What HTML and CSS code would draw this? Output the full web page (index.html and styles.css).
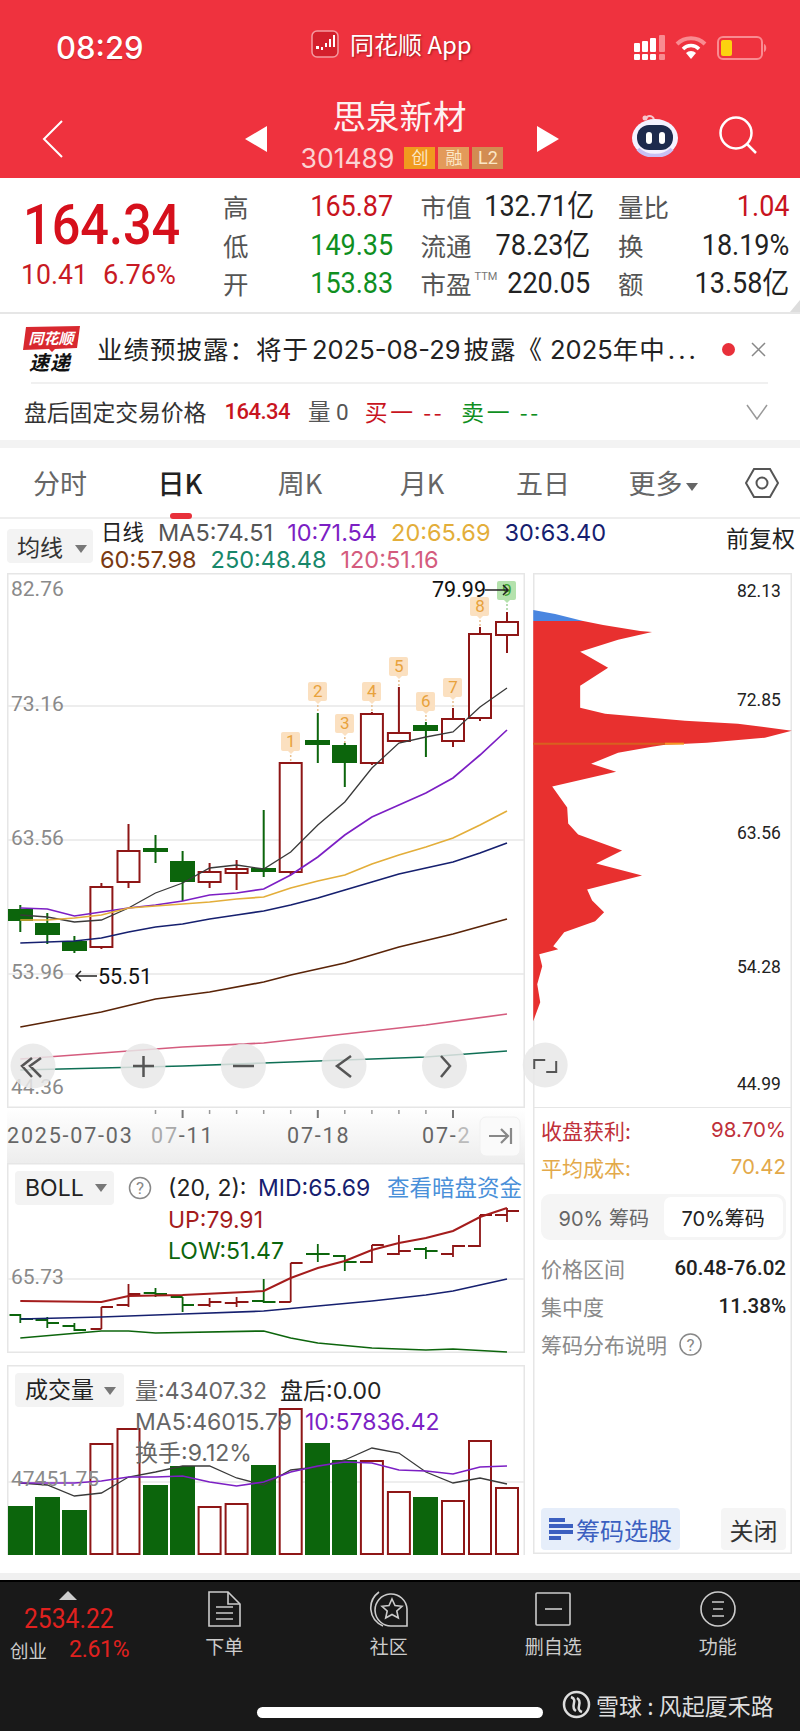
FILE: index.html
```html
<!DOCTYPE html>
<html lang="zh">
<head>
<meta charset="utf-8">
<title>思泉新材</title>
<link rel="stylesheet" href="styles.css">
</head>
<body>
<div class="page">
<header class="head">
  <div class="status">
    <div class="time">08:29</div>
    <div class="app">
      <svg class="app-logo" width="28" height="28" viewBox="0 0 28 28"><rect x="1" y="1" width="26" height="26" rx="5" fill="#d4202c" stroke="#f59aa0" stroke-width="1.5"/><path d="M5 19h3v-3H5zM10 17h2v3h-2zM14 13h2v4h-2zM18 9h2v8h-2zM22 5h2v12h-2z" fill="#fff"/></svg>
      <span class="app-name">同花顺 App</span>
    </div>
    <div class="sys">
      <svg width="32" height="26" viewBox="0 0 32 26"><g fill="#fff"><rect x="1" y="8" width="6" height="9" rx="1"/><rect x="9" y="6" width="6" height="11" rx="1"/><rect x="17" y="3" width="6" height="14" rx="1"/><rect x="1" y="19" width="6" height="6" rx="1"/><rect x="9" y="19" width="6" height="6" rx="1"/><rect x="17" y="19" width="6" height="6" rx="1"/></g><g fill="#f98b91"><rect x="26" y="0" width="6" height="17" rx="1"/><rect x="26" y="19" width="6" height="6" rx="1"/></g></svg>
      <svg class="wifi" width="32" height="24" viewBox="0 0 32 24"><path d="M2 8a20 20 0 0 1 28 0" fill="none" stroke="#f98b91" stroke-width="4"/><path d="M8 13a11 11 0 0 1 16 0" fill="none" stroke="#fff" stroke-width="3.5"/><path d="M16 23l-5-6a7 7 0 0 1 10 0z" fill="#fff"/></svg>
      <svg class="batt" width="51" height="24" viewBox="0 0 51 24"><rect x="1" y="1" width="44" height="22" rx="5" fill="none" stroke="#f98b91" stroke-width="2"/><rect x="4" y="4" width="11" height="16" rx="2" fill="#fcd20f"/><path d="M47 8c3 1 3 7 0 8z" fill="#f98b91"/></svg>
    </div>
  </div>
  <div class="nav">
    <div class="nav-back"><svg width="22" height="38" viewBox="0 0 22 38"><path d="M20 1L2 19l18 18" fill="none" stroke="#fff" stroke-width="2"/></svg></div>
    <svg class="tri" width="22" height="26" viewBox="0 0 22 26"><path d="M22 0v26L0 13z" fill="#fff"/></svg>
    <div class="nav-title">
      <div class="name">思泉新材</div>
      <div class="code-row"><span class="code">301489</span><span class="tag tag-a">创</span><span class="tag tag-b">融</span><span class="tag tag-c">L2</span></div>
    </div>
    <svg class="tri" width="22" height="26" viewBox="0 0 22 26"><path d="M0 0v26l22-13z" fill="#fff"/></svg>
    <svg class="robot" width="46" height="44" viewBox="0 0 46 44"><path d="M14 6c1-4 6-4 8 0" fill="none" stroke="#f6c6cc" stroke-width="2"/><circle cx="13" cy="5" r="2.5" fill="#f6c6cc"/><ellipse cx="23" cy="25" rx="23" ry="19" fill="#f4f2ff"/><path d="M6 36c8 9 26 9 34 0" fill="none" stroke="#c8c0f4" stroke-width="4"/><rect x="5" y="12" width="36" height="25" rx="12" fill="#1d2a4d"/><rect x="14" y="19" width="6" height="12" rx="3" fill="#fff"/><rect x="27" y="19" width="6" height="12" rx="3" fill="#fff"/></svg>
    <svg class="search" width="38" height="38" viewBox="0 0 38 38"><circle cx="17" cy="17" r="15.5" fill="none" stroke="#fff" stroke-width="2.5"/><path d="M28 28l9 9" stroke="#fff" stroke-width="2.5"/></svg>
  </div>
</header>

<section class="quote">
  <div class="q-left">
    <div class="q-price">164.34</div>
    <div class="q-change"><span class="q-ch-a">10.41</span><span class="q-ch-b">6.76%</span></div>
  </div>
  <div class="q-grid">
    <div class="q-cell"><span class="q-l">高</span><span class="q-v red">165.87</span></div>
    <div class="q-cell"><span class="q-l">市值</span><span class="q-v">132.71亿</span></div>
    <div class="q-cell"><span class="q-l">量比</span><span class="q-v red">1.04</span></div>
    <div class="q-cell"><span class="q-l">低</span><span class="q-v green">149.35</span></div>
    <div class="q-cell"><span class="q-l">流通</span><span class="q-v">78.23亿</span></div>
    <div class="q-cell"><span class="q-l">换</span><span class="q-v">18.19%</span></div>
    <div class="q-cell"><span class="q-l">开</span><span class="q-v green">153.83</span></div>
    <div class="q-cell"><span class="q-l">市盈<sup class="ttm">TTM</sup></span><span class="q-v">220.05</span></div>
    <div class="q-cell"><span class="q-l">额</span><span class="q-v">13.58亿</span></div>
  </div>
  <div class="corner"></div>
</section>

<section class="notice">
  <div class="notice-row">
    <svg class="ths" width="58" height="46" viewBox="0 0 58 46"><path d="M3 1L57 0 54 22 32 23 29 26 26 23 0 24z" fill="#d8282f"/><text x="28" y="18" class="ths-a">同花顺</text><text x="27" y="44" class="ths-b">速递</text></svg>
    <div class="notice-text">业绩预披露：将于<span class="lat">2025-08-29</span>披露《<span class="lat lat2">2025</span>年中<span class="dots">...</span></div>
    <span class="dot"></span>
    <svg class="close" width="15" height="15" viewBox="0 0 15 15"><path d="M1 1l13 13M14 1L1 14" stroke="#888" stroke-width="1.5"/></svg>
  </div>
  <div class="after-row">
    <span class="ah-label">盘后固定交易价格</span>
    <span class="ah-price">164.34</span>
    <span class="ah-vol">量 0</span>
    <span class="ah-buy">买一 --</span>
    <span class="ah-sell">卖一 --</span>
    <svg class="chev" width="22" height="16" viewBox="0 0 22 16"><path d="M1 1l10 14L21 1" fill="none" stroke="#999" stroke-width="1.5"/></svg>
  </div>
</section>

<nav class="tabs">
  <div class="tab">分时</div>
  <div class="tab active">日K</div>
  <div class="tab">周K</div>
  <div class="tab tab-s1">月K</div>
  <div class="tab tab-s2">五日</div>
  <div class="tab">更多<i class="caret-sm"></i></div>
  <svg class="hex" width="34" height="30" viewBox="0 0 34 30"><path d="M9 1h16l8 14-8 14H9L1 15z" fill="none" stroke="#555" stroke-width="2"/><circle cx="17" cy="15" r="5.5" fill="none" stroke="#555" stroke-width="2"/></svg>
</nav>

<div class="ma-bar">
  <div class="ma-btn">均线<i class="caret"></i></div>
  <div class="ma-lines">
    <div class="ma-row"><span class="ma-t">日线</span><span class="c-gray">MA5:74.51</span><span class="c-purple">10:71.54</span><span class="c-gold">20:65.69</span><span class="c-navy">30:63.40</span></div>
    <div class="ma-row"><span class="c-brown">60:57.98</span><span class="c-teal">250:48.48</span><span class="c-pink">120:51.16</span></div>
  </div>
  <div class="fq">前复权</div>
</div>

<main class="main">
<div class="left">
  <div class="panel chart">
    <svg class="canvas" width="518" height="535" viewBox="7 573 518 535">
      <path class="grid" d="M8 706H524M8 840H524M8 974H524"/>
      <text class="lbl" x="11" y="596">82.76</text>
      <text class="lbl" x="11" y="711">73.16</text>
      <text class="lbl" x="11" y="845">63.56</text>
      <text class="lbl" x="11" y="979">53.96</text>
      <text class="lbl" x="11" y="1094">44.36</text>
      <path class="wu" d="M101.4 883V949M128.5 824V888M209.6 863V888M236.6 860V890M290.7 762V875M371.9 712V765M398.9 687V742M453 708V747M480 627V721M507 612V653"/>
      <path class="wd" d="M20.3 905V932M47.3 913V944M74.4 936V953M155.5 835V863M182.6 851V901M263.7 810V877M317.8 713V763M344.8 743V787M425.9 722V757"/>
      <g class="dn">
        <rect x="8" y="909" width="25" height="12"/><rect x="35" y="923" width="25" height="12"/><rect x="62" y="941" width="25" height="10"/><rect x="143" y="848" width="25" height="4"/><rect x="170" y="861" width="25" height="21"/><rect x="251" y="868" width="25" height="4"/><rect x="305" y="740" width="25" height="5"/><rect x="332" y="745" width="25" height="18"/><rect x="413" y="725" width="25" height="6"/>
      </g>
      <g class="up">
        <rect x="90.4" y="887" width="22" height="60"/><rect x="117.5" y="851" width="22" height="31"/><rect x="198.6" y="872" width="22" height="10"/><rect x="225.6" y="869" width="22" height="4"/><rect x="279.7" y="763" width="22" height="109"/><rect x="360.9" y="714" width="22" height="49"/><rect x="387.9" y="733" width="22" height="8"/><rect x="442" y="719" width="22" height="22"/><rect x="469" y="634" width="22" height="84"/><rect x="496" y="622" width="22" height="13"/>
      </g>
      <polyline class="ln l-black" points="20.3,915 47.3,917 74.4,922 101.4,920 128.5,908 155.5,893 182.6,883 209.6,868 236.6,865 263.7,869 290.7,852 317.8,825 344.8,802 371.9,768 398.9,743 425.9,737 453,732 480,707 507,688"/>
      <polyline class="ln l-purple" points="20.3,908 47.3,909 74.4,916 101.4,912 128.5,908 155.5,905 182.6,901 209.6,895 236.6,893 263.7,889 290.7,875 317.8,857 344.8,835 371.9,817 398.9,805 425.9,793 453,778 480,755 507,730"/>
      <polyline class="ln l-gold" points="20.3,920 47.3,920 74.4,918 101.4,915 128.5,908 155.5,906 182.6,904 209.6,902 236.6,899 263.7,897 290.7,888 317.8,881 344.8,875 371.9,864 398.9,855 425.9,847 453,838 480,825 507,811"/>
      <polyline class="ln l-navy" points="20.3,943 47.3,942 74.4,941 101.4,938 128.5,932 155.5,927 182.6,924 209.6,919 236.6,915 263.7,911 290.7,905 317.8,898 344.8,890 371.9,882 398.9,874 425.9,868 453,862 480,853 507,843"/>
      <polyline class="ln l-brown" points="20.3,1027 74.4,1017 101.4,1012 155.5,999 209.6,992 263.7,982 290.7,975 344.8,963 398.9,947 453,934 507,919"/>
      <polyline class="ln l-pink" points="20.3,1059 101.4,1053 182.6,1047 263.7,1043 344.8,1034 425.9,1025 507,1014"/>
      <polyline class="ln l-teal" points="20.3,1070 101.4,1068 182.6,1066 263.7,1063 344.8,1060 425.9,1057 507,1051"/>
      <g class="pin"><rect x="281" y="732" width="19" height="19" rx="2"/><path class="pin-t" d="M288 751h6l-3 3z"/><path class="pin-l" d="M290.7 755V762"/><text x="290.7" y="747">1</text></g>
      <g class="pin"><rect x="308" y="682" width="19" height="19" rx="2"/><path class="pin-t" d="M315 701h6l-3 3z"/><path class="pin-l" d="M317.8 705V712"/><text x="317.8" y="697">2</text></g>
      <g class="pin"><rect x="335" y="714" width="19" height="19" rx="2"/><path class="pin-t" d="M342 733h6l-3 3z"/><path class="pin-l" d="M344.8 737V743"/><text x="344.8" y="729">3</text></g>
      <g class="pin"><rect x="362" y="682" width="19" height="19" rx="2"/><path class="pin-t" d="M369 701h6l-3 3z"/><path class="pin-l" d="M371.9 705V713"/><text x="371.9" y="697">4</text></g>
      <g class="pin"><rect x="389" y="657" width="19" height="19" rx="2"/><path class="pin-t" d="M396 676h6l-3 3z"/><path class="pin-l" d="M398.9 680V687"/><text x="398.9" y="672">5</text></g>
      <g class="pin"><rect x="416" y="692" width="19" height="19" rx="2"/><path class="pin-t" d="M423 711h6l-3 3z"/><path class="pin-l" d="M425.9 715V722"/><text x="425.9" y="707">6</text></g>
      <g class="pin"><rect x="443" y="678" width="19" height="19" rx="2"/><path class="pin-t" d="M450 697h6l-3 3z"/><path class="pin-l" d="M453 701V708"/><text x="453" y="693">7</text></g>
      <g class="pin"><rect x="470" y="597" width="19" height="19" rx="2"/><path class="pin-t" d="M477 616h6l-3 3z"/><path class="pin-l" d="M480 620V627"/><text x="480" y="612">8</text></g>
      <g class="pin pin-g"><rect x="497" y="581" width="19" height="19" rx="2"/><path class="pin-t" d="M504 600h6l-3 3z"/><path class="pin-l" d="M507 604V612"/><text x="507" y="596">9</text></g>
      <text class="mark" x="432" y="597">79.99</text>
      <path class="arrow" d="M485 590H508M503 585L508 590 503 595"/>
      <path class="arrow" d="M76 976H97M81 971L76 976 81 981"/>
      <text class="mark" x="98" y="984">55.51</text>
      <g class="fab"><circle cx="33" cy="1066" r="22.5"/><circle cx="143" cy="1066" r="22.5"/><circle cx="243.4" cy="1066" r="22.5"/><circle cx="344" cy="1066" r="22.5"/><circle cx="444.5" cy="1066" r="22.5"/></g>
      <path class="fab-i" d="M32 1058L22 1066 32 1077M41 1058L30 1066 41 1077M133 1066H154M143.5 1056V1077M233 1066H254M351 1056L337 1066 351 1077M441 1056L450 1066 441 1077"/>
    </svg>
  </div>
  <svg class="axis" width="518" height="55" viewBox="7 1108 518 55">
    <defs><linearGradient id="axg" x1="0" y1="0" x2="0" y2="1"><stop offset="0" stop-color="#fff"/><stop offset="1" stop-color="#ededed"/></linearGradient></defs>
    <rect x="7" y="1108" width="518" height="55" fill="url(#axg)"/>
    <path class="tick" d="M155.5 1110V1114M209.6 1110V1114M236.6 1110V1114M263.7 1110V1114M290.7 1110V1114M344.8 1110V1114M371.9 1110V1114M398.9 1110V1114M425.9 1110V1114"/>
    <path class="tick-b" d="M182.6 1110V1118M317.8 1110V1118M453 1110V1118"/>
    <text class="date" x="7" y="1143">2025-07-03</text>
    <text class="date" x="151" y="1143"><tspan fill="#aaa">07</tspan>-11</text>
    <text class="date" x="287" y="1143">07-18</text>
    <text class="date" x="422" y="1143">07-<tspan fill="#bbb">2</tspan></text>
    <rect x="480" y="1117" width="40" height="39" rx="6" fill="#fafafa" stroke="#f0f0f0"/>
    <path class="tojump" d="M489 1136H508M501 1129L508 1136 501 1143M511 1128V1144"/>
  </svg>
  <div class="panel boll">
    <svg class="canvas" width="518" height="190" viewBox="7 1163 518 190">
      <path class="grid" d="M8 1279H524"/>
      <rect class="btn" x="15" y="1171" width="99" height="34" rx="4"/>
      <text class="t-d" x="25" y="1196">BOLL</text>
      <path class="cr" d="M95 1184H107L101 1192z"/>
      <circle cx="140" cy="1188" r="10.5" fill="none" stroke="#888" stroke-width="1.5"/>
      <text class="t-q" x="140" y="1194">?</text>
      <text class="t-d" x="168" y="1196">(20, 2):</text>
      <text class="t-mid" x="258" y="1196">MID:65.69</text>
      <text class="t-link" x="387" y="1196">查看暗盘资金</text>
      <text class="t-up" x="168" y="1228">UP:79.91</text>
      <text class="t-low" x="168" y="1259">LOW:51.47</text>
      <text class="lbl" x="11" y="1284">65.73</text>
      <path class="tk-d" d="M20.3 1314V1323M9.5 1315H20.3M20.3 1319H33M47.3 1317V1328M35.5 1320H47.3M47.3 1323H59M74.4 1323V1331M62.5 1326H74.4M74.4 1330H86M155.5 1288V1297M143.7 1293H155.5M155.5 1294H167M182.6 1297V1312M170.7 1297H182.6M182.6 1305H194M263.7 1279V1303M252 1301H263.7M263.7 1302H275.5M317.8 1244V1262M306 1254H329.6M344.8 1255V1271M333 1256H344.8M344.8 1262H356.6M425.9 1247V1259M414 1249H425.9M425.9 1251H437.6"/>
      <path class="tk-u" d="M101.4 1307V1329M90.6 1329H101.4M101.4 1307H113M128.5 1284V1307M116.6 1305H128.5M128.5 1294H140.3M209.6 1298V1307M197.8 1305H209.6M209.6 1302H221.4M236.6 1297V1307M224.8 1303H236.6M236.6 1302H248.5M290.7 1263V1302M279 1302H290.7M290.7 1263H302.6M371.9 1245V1263M360 1262H371.9M371.9 1245H383.8M398.9 1235V1255M387 1254H398.9M398.9 1251H410.8M453 1245V1257M441 1254H453M453 1246H465M480 1215V1247M468 1246H480M480 1215H492M507 1208V1222M495 1215H507M507 1211H519"/>
      <polyline class="ln l-up" points="20.3,1301 101.4,1302 128.5,1296 182.6,1295 263.7,1291 290.7,1278 317.8,1268 344.8,1261 371.9,1250 398.9,1243 425.9,1238 453,1231 480,1217 507,1208"/>
      <polyline class="ln l-navy" points="20.3,1319 101.4,1317 182.6,1314 263.7,1311 317.8,1306 371.9,1301 425.9,1295 453,1291 480,1285 507,1279"/>
      <polyline class="ln l-green" points="20.3,1338 101.4,1331 128.5,1331 155.5,1333 263.7,1331 290.7,1338 317.8,1343 371.9,1348 425.9,1350 453,1349 507,1352"/>
    </svg>
  </div>
  <div class="panel vol">
    <svg class="canvas" width="518" height="190" viewBox="7 1365 518 190">
      <path class="grid" d="M8 1482H524"/>
      <rect class="btn" x="15" y="1373" width="109" height="34" rx="4"/>
      <text class="t-d cn" x="25" y="1398">成交量</text>
      <path class="cr" d="M104 1387H116L110 1395z"/>
      <g class="dn">
        <rect x="8" y="1506" width="25" height="49"/><rect x="35" y="1497" width="25" height="58"/><rect x="62" y="1510" width="25" height="45"/><rect x="143" y="1485" width="25" height="70"/><rect x="170" y="1466" width="25" height="89"/><rect x="251" y="1465" width="25" height="90"/><rect x="305" y="1443" width="25" height="112"/><rect x="332" y="1460" width="25" height="95"/><rect x="413" y="1497" width="25" height="58"/>
      </g>
      <g class="up">
        <rect x="90.4" y="1444" width="22" height="110"/><rect x="117.5" y="1429" width="22" height="125"/><rect x="198.6" y="1507" width="22" height="47"/><rect x="225.6" y="1504" width="22" height="50"/><rect x="279.7" y="1409" width="22" height="145"/><rect x="360.9" y="1461" width="22" height="93"/><rect x="387.9" y="1492" width="22" height="62"/><rect x="442" y="1501" width="22" height="53"/><rect x="469" y="1441" width="22" height="113"/><rect x="496" y="1488" width="22" height="66"/>
      </g>
      <polyline class="ln l-black" points="20.3,1483 47.3,1485 74.4,1496 101.4,1493 128.5,1477 155.5,1472 182.6,1466 209.6,1466 236.6,1478 263.7,1485 290.7,1470 317.8,1467 344.8,1460 371.9,1448 398.9,1453 425.9,1472 453,1483 480,1478 507,1484"/>
      <polyline class="ln l-purple" points="20.3,1483 47.3,1483 74.4,1483 101.4,1481 128.5,1477 155.5,1477 182.6,1476 209.6,1482 236.6,1486 263.7,1482 290.7,1472 317.8,1466 344.8,1462 371.9,1463 398.9,1470 425.9,1471 453,1474 480,1467 507,1466"/>
      <text class="t-g" x="135" y="1399">量:43407.32</text>
      <text class="t-d" x="280" y="1399">盘后:0.00</text>
      <text class="t-g" x="135" y="1430">MA5:46015.79</text>
      <text class="t-p" x="305" y="1430">10:57836.42</text>
      <text class="t-g" x="135" y="1461">换手:9.12%</text>
      <text class="lbl" x="11" y="1486">47451.75</text>
    </svg>
  </div>
</div>

<aside class="right">
  <svg class="chip" width="259" height="535" viewBox="533 573 259 535">
    <polygon fill="#4a86e0" points="533,610 555,614 583,621 533,621"/>
    <polygon fill="#e8302f" points="533,621 583,621 603,625 640,631 652,632 618,640 580,652 608,668 580,686 580,708 605,714 685,721 738,724 792,731 765,738 707,743 665,745 652,747 618,753 591,764 616,772 552,787 567,808 568,824 578,835 622,851 596,864 642,876 587,890 592,901 604,913 595,922 564,933 553,947 558,950 539,955 542,967 537,985 540,1003 533,1022"/>
    <path d="M533 744H665" stroke="#d8601f" stroke-width="2"/><path d="M665 744H684" stroke="#f59a23" stroke-width="2"/>
    <text class="chip-l" x="781" y="597">82.13</text>
    <text class="chip-l" x="781" y="706">72.85</text>
    <text class="chip-l" x="781" y="840">63.56</text>
    <text class="chip-l" x="781" y="974">54.28</text>
    <text class="chip-l" x="781" y="1091">44.99</text>
    <circle class="fab-c" cx="545" cy="1066" r="22.5"/>
    <path class="fab-i thin" d="M534 1070V1061H545M556 1062V1073H546"/>
  </svg>
  <div class="stats">
    <div class="s-row h37 c-profit"><span>收盘获利:</span><span class="s-num">98.70%</span></div>
    <div class="s-row h37 c-cost"><span>平均成本:</span><span class="s-num">70.42</span></div>
    <div class="seg"><div class="seg-i">90% 筹码</div><div class="seg-i on">70%筹码</div></div>
    <div class="s-row c-k"><span>价格区间</span><span class="s-val">60.48-76.02</span></div>
    <div class="s-row c-k"><span>集中度</span><span class="s-val">11.38%</span></div>
    <div class="s-row c-k left-row"><span>筹码分布说明</span><svg width="23" height="23" viewBox="0 0 23 23"><circle cx="11.5" cy="11.5" r="10.5" fill="none" stroke="#888" stroke-width="1.5"/><text class="t-q" x="11.5" y="17.5">?</text></svg></div>
    <div class="s-btns">
      <div class="b-blue"><svg width="24" height="24" viewBox="0 0 24 24"><path d="M0 3h16M0 9h24M0 15h24M0 21h12" stroke="#3b5fc0" stroke-width="4"/></svg>筹码选股</div>
      <div class="b-gray">关闭</div>
    </div>
  </div>
</aside>
</main>
<div class="gap"></div>

<footer class="foot">
  <div class="foot-nav">
    <div class="idx">
      <i class="idx-tri"></i>
      <div class="idx-v">2534.22</div>
      <div class="idx-r"><span class="idx-n">创业</span><span class="idx-p">2.61%</span></div>
    </div>
    <div class="f-item"><svg width="34" height="36" viewBox="0 0 34 36"><path d="M2 1H21L33 13V35H2z" fill="none" stroke="#ccc" stroke-width="1.6"/><path d="M21 1V13H33" fill="none" stroke="#ccc" stroke-width="1.6"/><path d="M9 16H26M9 22H26M9 28H26" stroke="#ccc" stroke-width="1.6"/></svg><span>下单</span></div>
    <div class="f-item"><svg width="40" height="36" viewBox="0 0 40 36"><path d="M10 1C-2 10-1 28 14 35" fill="none" stroke="#ccc" stroke-width="1.6"/><path d="M38 35H23A16 16 0 1 1 38 18z" fill="none" stroke="#ccc" stroke-width="1.6"/><path d="M23 8l3 6.5 7 .8-5.2 4.700 1.5 7-6.300-3.500-6.300 3.500 1.500-7-5.200-4.700 7-.8z" fill="none" stroke="#ccc" stroke-width="1.6"/></svg><span>社区</span></div>
    <div class="f-item"><svg width="38" height="36" viewBox="0 0 38 36"><rect x="2" y="2" width="34" height="32" rx="1" fill="none" stroke="#ccc" stroke-width="1.6"/><path d="M11 18H28" stroke="#ccc" stroke-width="1.6"/></svg><span>删自选</span></div>
    <div class="f-item"><svg width="36" height="36" viewBox="0 0 36 36"><circle cx="18" cy="18" r="17" fill="none" stroke="#ccc" stroke-width="1.6"/><path d="M12 11H24M13 18H23M12 25H24" stroke="#ccc" stroke-width="1.6"/></svg><span>功能</span></div>
  </div>
  <div class="foot-bottom">
    <div class="home"></div>
    <div class="wm"><svg width="29" height="29" viewBox="0 0 29 29"><circle cx="14.5" cy="14.5" r="12.5" fill="none" stroke="#ddd" stroke-width="2.5"/><path d="M9 7c8 3-2 10 5 14M20 22c-8-3 2-10-5-14" fill="none" stroke="#ddd" stroke-width="2.5"/></svg><span>雪球 : 风起厦禾路</span></div>
  </div>
</footer>
</div>
</body>
</html>
```

FILE: styles.css
```css
* { box-sizing: border-box; }
html, body { margin: 0; padding: 0; background: #fff; }
body { font-family: Roboto, "Noto Sans CJK SC", sans-serif; color: #222; }
.page { width: 800px; height: 1731px; overflow: hidden; display: flex; flex-direction: column; }
svg { display: block; flex: none; }

/* header */
.head { height: 178px; background: #ef323e; color: #fff; flex: none; }
.status { height: 94px; display: flex; align-items: center; }
.time { width: 311px; padding-left: 56px; font: 500 31px Inter, sans-serif; text-shadow: 0 1px 1px rgba(120,0,0,.4); }
.app { display: flex; align-items: center; gap: 11px; margin-top: -6px; white-space: nowrap; }
.app-name { font-size: 24px; line-height: 30px; text-shadow: 1px 1px 2px rgba(80,0,0,.5); font-family: "Noto Sans CJK SC", sans-serif; }
.sys { margin-left: auto; padding-right: 32px; display: flex; align-items: center; gap: 10px; margin-top: 2px; }
.nav { height: 84px; display: flex; align-items: center; }
.nav-back { width: 245px; padding-left: 42px; margin-top: 6px; }
.tri { margin-top: 6px; }
.nav-title { width: 270px; display: flex; flex-direction: column; align-items: center; align-self: flex-start; }
.name { font: 33.5px/42px "Noto Sans CJK SC", sans-serif; padding-right: 5px; color: #fdf1f1; }
.code-row { display: flex; align-items: center; gap: 3px; margin-top: 10px; }
.code { font: 26.5px/24px Inter, sans-serif; color: #fbd3d3; margin-right: 7px; }
.tag { width: 31px; height: 22px; display: flex; align-items: center; justify-content: center; font-size: 17px; line-height: 22px; color: #fbe7c6; }
.tag-a { background: #f09a1f; }
.tag-b { background: #e39a5a; }
.tag-c { background: #d28c52; font-size: 18px; }
.robot { margin-left: 73px; margin-top: -2px; }
.search { margin-left: 41px; margin-top: -2px; }

/* quote */
.quote { height: 136px; flex: none; display: flex; position: relative; border-bottom: 2px solid #e6e6e6; }
.q-left { width: 223px; padding-left: 23px; }
.q-price { font: 500 56px/62px Roboto, sans-serif; color: #d6101c; margin-top: 16px; transform: scaleX(.9); transform-origin: left center; white-space: nowrap; }
.q-change { display: flex; font: 400 28px/34px Roboto, sans-serif; color: #c81a24; margin-top: 2px; position: relative; height: 34px; white-space: nowrap; }
.q-ch-a { transform: scaleX(.95); transform-origin: left center; margin-left: -2px; width: 82px; }
.q-ch-b { transform: scaleX(.97); transform-origin: left center; }
.q-grid { display: grid; grid-template-columns: 170px 170px 171px; column-gap: 27.5px; grid-auto-rows: 38.5px; padding-top: 9px; }
.q-cell { display: flex; justify-content: space-between; align-items: center; white-space: nowrap; }
.q-l { font: 25.5px/38px "Noto Sans CJK SC", sans-serif; color: #555; position: relative; }
.ttm { font: 11px/11px Roboto, sans-serif; color: #777; position: relative; top: -14px; vertical-align: baseline; margin-left: 3px; }
.q-v { font: 400 30px/38px Roboto, "Noto Sans CJK SC", sans-serif; color: #222; transform: scaleX(.9); transform-origin: right center; }
.red { color: #c8141e; }
.green { color: #0f8f1f; }
.corner { position: absolute; right: 0; bottom: 0; width: 0; height: 0; border-left: 10px solid transparent; border-bottom: 12px solid #ddd; }

/* notice */
.notice { height: 134px; flex: none; display: flex; flex-direction: column; border-bottom: 8px solid #f3f3f3; }
.notice-row { height: 70px; flex: none; margin: 0 32px 0 0; display: flex; align-items: center; padding-left: 23px; position: relative; }
.notice-row::after { content: ""; position: absolute; left: 31px; right: 0; bottom: 0; height: 2px; background: #f0f0f0; }
.ths { overflow: visible; }
.ths-a { font: italic 700 15px "Noto Sans CJK SC", sans-serif; fill: #fff; text-anchor: middle; }
.ths-b { font: italic 700 20px "Noto Sans CJK SC", sans-serif; fill: #111; text-anchor: middle; letter-spacing: 1px; }
.notice-text { margin-left: 16px; width: 612px; font: 25.5px/34px "Noto Sans CJK SC", sans-serif; color: #222; white-space: nowrap; letter-spacing: 1px; }
.lat { font-family: Inter, sans-serif; letter-spacing: 0; margin: 0 3px; }
.lat2 { margin: 0 0 0 7px; }
.dots { font-family: Inter, sans-serif; letter-spacing: 3px; margin-left: 2px; }
.dot { width: 13px; height: 13px; border-radius: 50%; background: #e8303a; margin-left: 13px; flex: none; }
.close { margin-left: 16px; }
.after-row { height: 56px; flex: none; display: flex; align-items: center; padding: 0 32px 0 24px; white-space: nowrap; }
.ah-label { font: 22.8px/30px "Noto Sans CJK SC", sans-serif; color: #333; }
.ah-price { font: 500 22px/30px Roboto, sans-serif; color: #c8141e; margin-left: 18px; letter-spacing: -.5px; }
.ah-vol { font: 22.5px/30px Roboto, "Noto Sans CJK SC", sans-serif; color: #555; margin-left: 18px; }
.ah-buy { font: 22.8px/30px "Noto Sans CJK SC", sans-serif; color: #c8141e; margin-left: 16px; letter-spacing: 2.6px; }
.ah-sell { font: 22.8px/30px "Noto Sans CJK SC", sans-serif; color: #0f8f1f; margin-left: 17px; letter-spacing: 2.6px; }
.chev { margin-left: auto; }

/* tabs */
.tabs { height: 71px; flex: none; display: flex; align-items: center; border-bottom: 2px solid #eee; position: relative; }
.tab { width: 120px; text-align: center; font: 27px/40px "Noto Sans CJK SC", Inter, sans-serif; color: #666; position: relative; }
.tab.active { color: #222; font-weight: 500; }
.tab.active::after { content: ""; position: absolute; left: 50px; bottom: -16px; width: 22px; height: 6px; border-radius: 3px; background: #e8303a; }
.tab-s1 { margin-left: 2px; }
.tab-s2 { margin-left: 1px; }
.caret-sm { display: inline-block; margin-left: 3px; vertical-align: 3px; border-left: 6px solid transparent; border-right: 6px solid transparent; border-top: 8px solid #666; }
.hex { margin-left: 22px; }
.caret { display: inline-block; margin-left: 12px; vertical-align: 3px; border-left: 6px solid transparent; border-right: 6px solid transparent; border-top: 8px solid #777; }

/* ma bar */
.ma-bar { height: 54px; flex: none; display: flex; padding-left: 7px; position: relative; }
.ma-btn { width: 86px; height: 34px; margin-top: 10px; border-radius: 4px; background: #f3f3f3; font: 23px/34px "Noto Sans CJK SC", sans-serif; padding-left: 10px; color: #333; white-space: nowrap; }
.ma-lines { margin-left: 7px; font: 23.5px/27px Inter, "Noto Sans CJK SC", sans-serif; white-space: nowrap; }
.ma-row { display: flex; gap: 14px; height: 27px; }
.ma-t { margin-left: 1px; color: #222; font-size: 21.5px; }
.c-gray { color: #555; }
.c-purple { color: #7c1fc4; }
.c-gold { color: #e3ae3a; }
.c-navy { color: #16206f; }
.c-brown { color: #7a3a12; }
.c-teal { color: #17876a; }
.c-pink { color: #d45c7e; }
.fq { margin-left: auto; padding: 0 5px 0 0; font: 23px/36px "Noto Sans CJK SC", sans-serif; color: #222; }

/* main */
.main { height: 982px; flex: none; display: flex; padding-left: 7px; }
.left { width: 518px; display: flex; flex-direction: column; }
.panel { box-shadow: inset 0 0 0 1.5px #e6e6e6; flex: none; }
.chart { height: 535px; }
.axis { height: 55px; }
.boll { height: 190px; }
.vol { height: 190px; margin-top: 12px; box-shadow: inset 0 1.5px 0 0 #e6e6e6, inset 1.5px 0 0 0 #e6e6e6, inset -1.5px 0 0 0 #e6e6e6; }
.grid { stroke: #e8e8e8; stroke-width: 1.5; fill: none; }
.lbl { font: 21px Roboto, sans-serif; fill: #8a8a8a; }
.wu { stroke: #8e1616; stroke-width: 2; fill: none; }
.wd { stroke: #0c650c; stroke-width: 2; fill: none; }
.dn rect { fill: #0c650c; }
.up rect { fill: #fff; stroke: #8e1616; stroke-width: 2; }
.ln { fill: none; stroke-width: 1.7; }
.l-black { stroke: #3a3a3a; stroke-width: 1.3; }
.l-purple { stroke: #7c1fc4; }
.l-gold { stroke: #e3ae3a; }
.l-navy { stroke: #16206f; }
.l-brown { stroke: #5a2408; }
.l-pink { stroke: #d45c7e; }
.l-teal { stroke: #0f6f55; }
.l-up { stroke: #a41c1c; stroke-width: 2; }
.l-green { stroke: #0c650c; }
.pin rect, .pin-t { fill: #fbe0c0; }
.pin-l { stroke: #e8c090; stroke-width: 1.5; stroke-dasharray: 2 2; fill: none; }
.pin text { font: 17px Roboto, sans-serif; fill: #e8a23c; text-anchor: middle; }
.pin-g rect, .pin-g .pin-t { fill: #b4e2ac; }
.pin-g .pin-l { stroke: #a0d098; }
.pin-g text { fill: #3aa02a; }
.mark { font: 400 21.5px Roboto, sans-serif; fill: #111; }
.arrow { stroke: #222; stroke-width: 1.5; fill: none; }
.fab circle, .fab-c { fill: rgba(232,232,232,.85); }
.fab-i { stroke: #555; stroke-width: 2.5; fill: none; }
.fab-i.thin { stroke-width: 2; }
.tick { stroke: #999; stroke-width: 1.5; }
.tick-b { stroke: #777; stroke-width: 2; }
.date { font: 21.5px Roboto, sans-serif; fill: #666; letter-spacing: 1.8px; }
.tojump { stroke: #888; stroke-width: 2.2; fill: none; }
.btn { fill: #f3f3f3; }
.cr { fill: #777; }
.t-d { font: 23px Inter, "Noto Sans CJK SC", sans-serif; fill: #222; }
.t-d.cn { font-family: "Noto Sans CJK SC", sans-serif; }
.t-g { font: 23px Inter, "Noto Sans CJK SC", sans-serif; fill: #666; }
.t-p { font: 23px Inter, sans-serif; fill: #7c1fc4; }
.t-mid { font: 23px Inter, sans-serif; fill: #16206f; }
.t-q { font: 17px Roboto, sans-serif; fill: #888; text-anchor: middle; }
.t-link { font: 22.5px "Noto Sans CJK SC", sans-serif; fill: #4a90d9; }
.t-up { font: 23px Inter, sans-serif; fill: #a41c1c; }
.t-low { font: 23px Inter, sans-serif; fill: #0c650c; }
.tk-d { stroke: #0c650c; stroke-width: 1.8; fill: none; }
.tk-u { stroke: #8e1616; stroke-width: 1.8; fill: none; }

/* right */
.right { width: 259px; margin-left: 8px; height: 981px; display: flex; flex-direction: column; box-shadow: inset 0 0 0 1.5px #e6e6e6; }
.chip { border-bottom: 1.5px solid #e6e6e6; overflow: visible; position: relative; }
.chip-l { font: 17.5px Roboto, sans-serif; fill: #222; text-anchor: end; }
.stats { flex: 1; display: flex; flex-direction: column; padding: 3px 6px 4px 8px; font-family: "Noto Sans CJK SC", sans-serif; }
.s-row { display: flex; justify-content: space-between; align-items: center; height: 38px; font-size: 21px; }
.h37 { height: 37px; }
.c-profit { color: #c0303a; }
.c-cost { color: #e3a94a; }
.c-k { color: #8a8a8a; }
.left-row { justify-content: flex-start; gap: 12px; }
.s-num { font: 20.5px Inter, sans-serif; }
.s-val { font: 500 20.5px Roboto, sans-serif; color: #222; }
.seg { height: 46px; margin: 9px 0; padding: 3px; border-radius: 9px; background: #f5f5f5; display: flex; font-size: 21px; flex: none; }
.seg-i { flex: 1; display: flex; align-items: center; justify-content: center; color: #666; border-radius: 7px; font-family: Inter, "Noto Sans CJK SC", sans-serif; font-size: 20px; white-space: nowrap; }
.seg-i.on { background: #fff; color: #222; }
.s-btns { margin-top: auto; display: flex; justify-content: space-between; height: 42px; font-size: 24px; }
.b-blue { width: 139px; background: #e6eefa; color: #3b5fc0; border-radius: 4px; display: flex; align-items: center; justify-content: center; gap: 3px; white-space: nowrap; }
.b-gray { width: 65px; background: #f5f5f5; color: #333; border-radius: 4px; display: flex; align-items: center; justify-content: center; }

.gap { height: 25px; flex: none; border-bottom: 7px solid #f0f0f0; }

/* footer */
.foot { flex: 1; background: #191919; border-top: 2px solid #000; display: flex; flex-direction: column; color: #ccc; }
.foot-nav { display: flex; height: 108px; flex: none; }
.idx { width: 142px; display: flex; flex-direction: column; align-items: flex-start; padding-left: 10px; }
.idx-tri { margin: 9px 0 0 49px; border-left: 9px solid transparent; border-right: 9px solid transparent; border-bottom: 9px solid #ccc; }
.idx-v { font: 28px/28px Roboto, sans-serif; color: #e0211f; margin: 5px 0 0 14px; transform: scaleX(.88); transform-origin: left center; white-space: nowrap; }
.idx-r { display: flex; align-items: center; margin-top: 3px; }
.idx-n { font: 18.5px/28px "Noto Sans CJK SC", sans-serif; width: 59px; color: #ccc; }
.idx-p { font: 23px/28px Roboto, sans-serif; color: #e0211f; letter-spacing: -.3px; }
.f-item { width: 164.5px; display: flex; flex-direction: column; align-items: center; padding-top: 9px; gap: 7px; font: 19px/24px "Noto Sans CJK SC", sans-serif; color: #ccc; }
.foot-bottom { display: flex; padding-left: 257px; align-items: flex-end; }
.home { width: 286px; height: 11px; border-radius: 6px; background: #fff; margin-bottom: 1px; }
.wm { display: flex; align-items: center; gap: 5px; margin-left: 19px; font: 23px/28px "Noto Sans CJK SC", sans-serif; color: #ddd; white-space: nowrap; }
```
